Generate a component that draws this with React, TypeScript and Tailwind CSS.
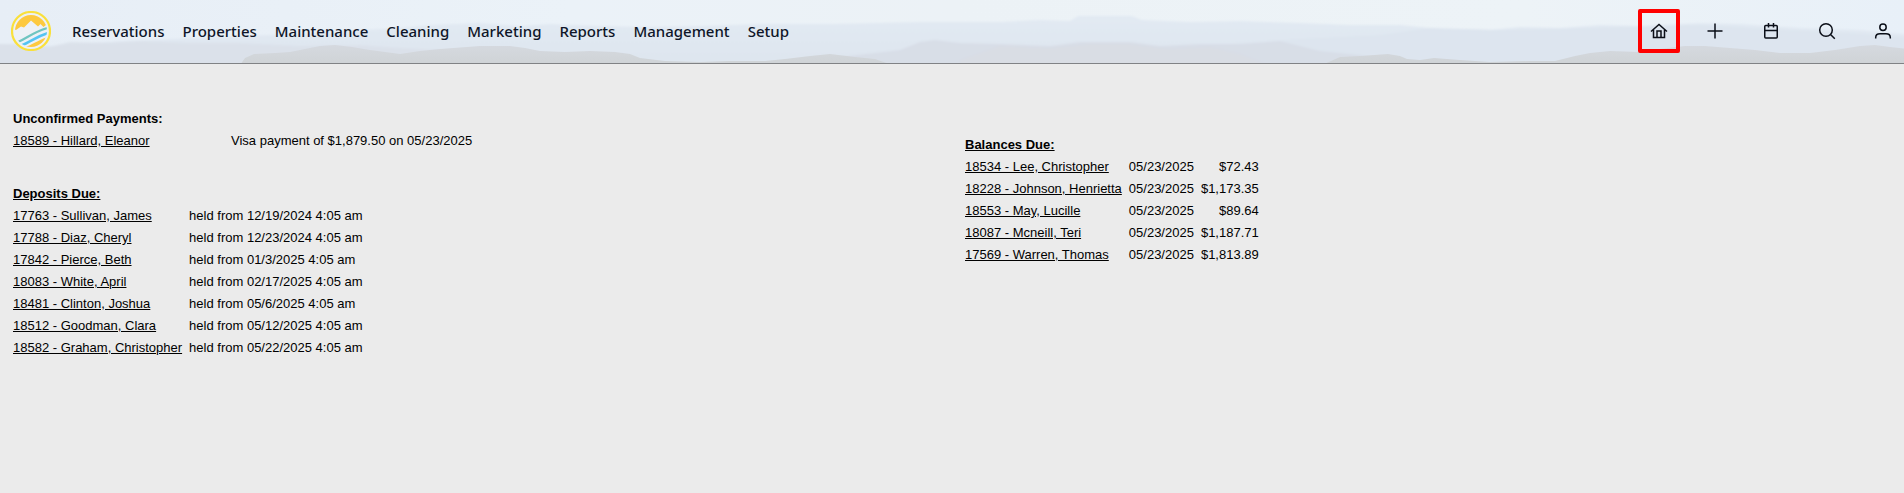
import type { ReactNode } from "react";

const menu = [
  "Reservations",
  "Properties",
  "Maintenance",
  "Cleaning",
  "Marketing",
  "Reports",
  "Management",
  "Setup",
];

const payments = [
  { guest: "18589 - Hillard, Eleanor", note: "Visa payment of $1,879.50 on 05/23/2025" },
];

const deposits = [
  { guest: "17763 - Sullivan, James", held: "held from 12/19/2024 4:05 am" },
  { guest: "17788 - Diaz, Cheryl", held: "held from 12/23/2024 4:05 am" },
  { guest: "17842 - Pierce, Beth", held: "held from 01/3/2025 4:05 am" },
  { guest: "18083 - White, April", held: "held from 02/17/2025 4:05 am" },
  { guest: "18481 - Clinton, Joshua", held: "held from 05/6/2025 4:05 am" },
  { guest: "18512 - Goodman, Clara", held: "held from 05/12/2025 4:05 am" },
  { guest: "18582 - Graham, Christopher", held: "held from 05/22/2025 4:05 am" },
];

const balances = [
  { guest: "18534 - Lee, Christopher", date: "05/23/2025", amount: "$72.43" },
  { guest: "18228 - Johnson, Henrietta", date: "05/23/2025", amount: "$1,173.35" },
  { guest: "18553 - May, Lucille", date: "05/23/2025", amount: "$89.64" },
  { guest: "18087 - Mcneill, Teri", date: "05/23/2025", amount: "$1,187.71" },
  { guest: "17569 - Warren, Thomas", date: "05/23/2025", amount: "$1,813.89" },
];

function Mountains() {
  return (
    <svg
      className="absolute inset-0 h-full w-full"
      viewBox="0 0 1904 63"
      preserveAspectRatio="none"
      aria-hidden
    >
      <defs>
        <linearGradient id="sky" x1="0" x2="1" y1="0" y2="0">
          <stop offset="0" stopColor="#e7eef6" />
          <stop offset="0.3" stopColor="#ebf2f8" />
          <stop offset="0.5" stopColor="#ecf2f6" />
          <stop offset="0.8" stopColor="#edf3f7" />
          <stop offset="1" stopColor="#e8f0f8" />
        </linearGradient>
        <linearGradient id="far" x1="0" x2="0" y1="0" y2="1">
          <stop offset="0" stopColor="#e2eaf3" />
          <stop offset="1" stopColor="#dde4ee" />
        </linearGradient>
        <linearGradient id="near" x1="0" x2="0" y1="0" y2="1">
          <stop offset="0" stopColor="#d5d9df" />
          <stop offset="1" stopColor="#cfd3d6" />
        </linearGradient>
        <filter id="haze" x="-1%" y="-10%" width="102%" height="120%">
          <feGaussianBlur stdDeviation="1" />
        </filter>
        <filter id="softEdge" x="-1%" y="-10%" width="102%" height="120%">
          <feGaussianBlur stdDeviation="0.6" />
        </filter>
      </defs>
      <rect width="1904" height="63" fill="url(#sky)" />
      <g filter="url(#haze)">
        <path
          fill="url(#far)"
          d="M-9 44 50 46 120 41 200 38 270 35 320 33 360 30 400 28 430 25 480 23 520 26 550 24 600 26 650 27 700 26 760 24 830 24 920 22 1000 22 1040 20 1070 21 1078 16 1132 16 1142 20 1190 22 1240 21 1300 23 1350 25 1400 25 1440 29 1490 30 1520 27 1560 28 1600 25 1640 26 1700 23 1740 24 1800 28 1860 30 1913 35V75H-9Z"
        />
        <path
          fill="#dae0e9"
          fillOpacity="0.8"
          d="M-9 44 20 44 50 47 70 42 110 43 140 41 190 43 240 43 300 46 360 45 400 48 440 50 500 58 560 66H-9Z"
        />
        <path
          fill="#dde5ef"
          d="M1230 44 1300 39 1380 35 1430 28 1500 30 1560 29 1620 27 1700 25 1770 29 1850 33 1913 38V75H1230Z"
        />
        <path
          fill="#d8dee7"
          d="M840 57 900 50 920 42 935 40 960 43 1000 44 1050 46 1080 42 1130 42 1160 46 1200 44 1240 44 1280 41 1300 46 1320 51 1360 55 1400 66H820Z"
        />
        <path
          fill="#dadce4"
          fillOpacity="0.8"
          d="M960 60 1000 46 1050 48 1090 44 1130 44 1170 49 1210 47 1240 54 1270 66H960Z"
        />
      </g>
      <g filter="url(#softEdge)" fill="url(#near)">
        <path d="M240 65 245 58 254 54 275 53 290 52 305 49 320 46 335 45 352 47 370 50 400 54 420 51 440 49 480 46 510 46 525 48 540 51 565 52 590 51 615 52 630 54 640 58 665 61 700 62 730 61 765 61 785 59 810 56 830 54 855 57 875 59 892 65Z" />
        <path d="M1322 65 1340 57 1360 56 1388 54 1400 56 1407 59 1420 60 1434 58 1460 60 1490 62 1530 61 1555 61 1575 56 1590 53 1610 51 1640 52 1660 49 1685 46 1705 46 1730 48 1755 50 1780 53 1810 53 1835 50 1860 46 1875 45 1890 47 1908 49V65Z" />
      </g>
    </svg>
  );
}

function Logo() {
  return (
    <svg viewBox="0 0 40 40" className="size-10" aria-hidden>
      <defs>
        <clipPath id="disc">
          <circle cx="20" cy="20" r="16" />
        </clipPath>
      </defs>
      <circle cx="20" cy="20" r="19" fill="#edf1f6" stroke="#f9e03c" strokeWidth="2.2" />
      <g clipPath="url(#disc)">
        <path
          fill="#fdc93f"
          d="M0 0H40V17L35 14 32.500 16 29.500 13 27 15.500 20 9.500 13 16.500 10 15.500 5 19 0 18Z"
        />
        <path fill="#fdc93f" d="M12 36.500C20 35 26 29 40 25V40H8Z" />
        <path d="M7 31C17 26.500 23 20.500 38 16.500" fill="none" stroke="#6fc5c0" strokeWidth="2.2" />
        <path d="M10 34.500C20 31 26 24.500 39 21.500" fill="none" stroke="#55c4f2" strokeWidth="2.6" />
      </g>
    </svg>
  );
}

function IconButton({
  label,
  active,
  children,
}: {
  label: string;
  active?: boolean;
  children: ReactNode;
}) {
  return (
    <button
      type="button"
      aria-label={label}
      className={
        active
          ? "flex h-11 w-[42px] items-center justify-center rounded-xs border-4 border-[#ff0000]"
          : "flex h-11 w-[42px] items-center justify-center"
      }
    >
      <svg
        viewBox="0 0 24 24"
        className="size-6 shrink-0"
        fill="none"
        stroke="#0b0f18"
        strokeWidth="1.5"
        aria-hidden
      >
        {children}
      </svg>
    </button>
  );
}

function Header() {
  return (
    <header className="relative border-b border-[#808285]">
      <Mountains />
      <div className="relative flex h-[63px] items-center justify-between pb-px pl-[11px]">
        <div className="flex items-center">
          <a href="#" aria-label="Home page">
            <Logo />
          </a>
          <nav className="ml-[21px] flex gap-[18px] pb-px font-['Noto_Sans','Open_Sans',sans-serif] text-[15px] leading-6 font-medium text-[#0f1628]">
            {menu.map((item) => (
              <a key={item} href="#">
                {item}
              </a>
            ))}
          </nav>
        </div>
        <div className="flex gap-[14px]">
          <IconButton label="Dashboard" active>
            <path d="M4 12.500 12 5.500 20 12.500M6.500 10.500V18.500H17.500V10.500M10 18.500V12H14V18.500" />
          </IconButton>
          <IconButton label="Add">
            <path d="M12 4.500V19.500M4.500 12H19.500" />
          </IconButton>
          <IconButton label="Calendar">
            <rect x="5.750" y="6.500" width="12.500" height="12.500" rx="1" />
            <path d="M6 11.500H18M9.500 4V8.500M14.500 4V8.500" />
          </IconButton>
          <IconButton label="Search">
            <circle cx="11" cy="11" r="6.300" />
            <path d="M15.500 15.500 19.800 19.800" />
          </IconButton>
          <IconButton label="Account">
            <circle cx="12" cy="8.200" r="3.200" />
            <path d="M4.700 19.500V18.500C4.700 16 6.500 14.800 9 14.800H15C17.500 14.800 19.300 16 19.300 18.500V19.500" />
          </IconButton>
        </div>
      </div>
    </header>
  );
}

function GuestLink({ children }: { children: ReactNode }) {
  return (
    <a href="#" className="underline underline-offset-1">
      {children}
    </a>
  );
}

export default function App() {
  return (
    <div className="min-h-screen bg-[#ebebeb] font-['Liberation_Sans',Arial,sans-serif] text-[13px] leading-[22px] text-black">
      <Header />
      <main className="grid grid-cols-2">
        <div className="pt-11 pl-[13px]">
          <section>
            <h2 className="font-bold">Unconfirmed Payments:</h2>
            <table>
              <tbody>
                {payments.map((row) => (
                  <tr key={row.guest}>
                    <td className="w-[218px]">
                      <GuestLink>{row.guest}</GuestLink>
                    </td>
                    <td>{row.note}</td>
                  </tr>
                ))}
              </tbody>
            </table>
          </section>
          <section className="mt-[31px]">
            <h2 className="font-bold underline underline-offset-1">Deposits Due:</h2>
            <table>
              <tbody>
                {deposits.map((row) => (
                  <tr key={row.guest}>
                    <td className="pr-[7px]">
                      <GuestLink>{row.guest}</GuestLink>
                    </td>
                    <td>{row.held}</td>
                  </tr>
                ))}
              </tbody>
            </table>
          </section>
        </div>
        <section className="pt-[70px] pl-[13px]">
          <h2 className="font-bold underline underline-offset-1">Balances Due:</h2>
          <table>
            <tbody>
              {balances.map((row) => (
                <tr key={row.guest}>
                  <td className="pr-[7px]">
                    <GuestLink>{row.guest}</GuestLink>
                  </td>
                  <td className="pr-[7px]">{row.date}</td>
                  <td className="text-right">{row.amount}</td>
                </tr>
              ))}
            </tbody>
          </table>
        </section>
      </main>
    </div>
  );
}
